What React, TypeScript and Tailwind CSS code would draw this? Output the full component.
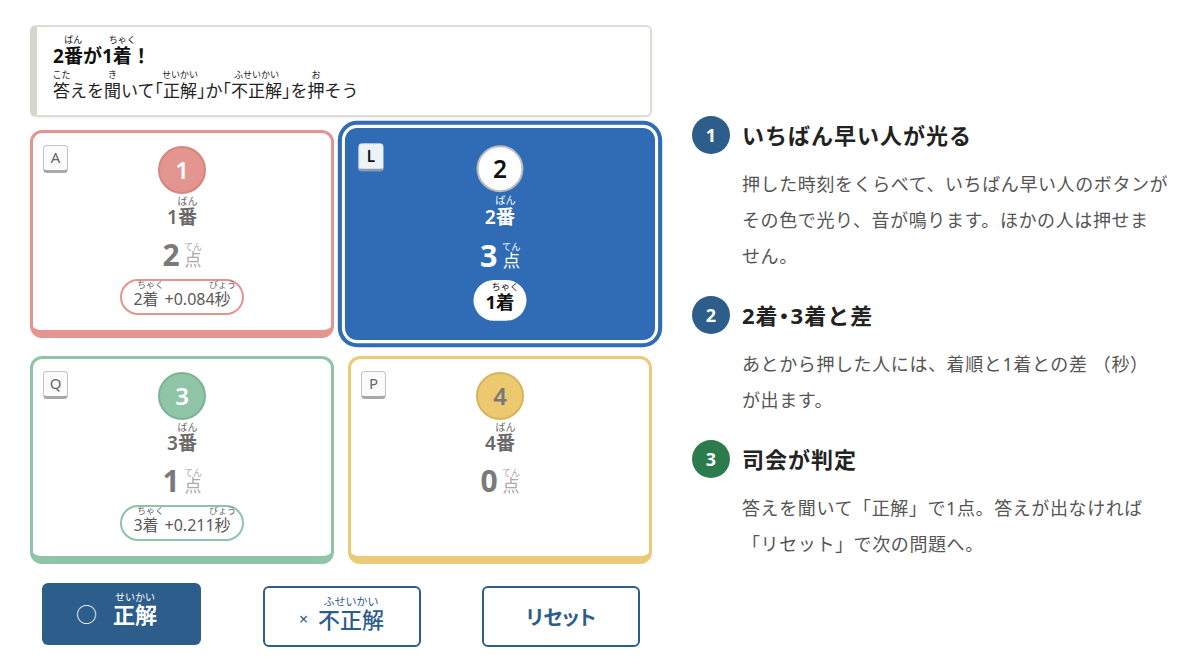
import React from "react";

// Furigana: the reading sits just above its base characters.
function Rb({ base, ruby, rc = "text-[9px]" }: { base: string; ruby: string; rc?: string }) {
  return (
    <span className="relative inline-block">
      {base}
      <span
        className={
          "absolute bottom-full left-1/2 -translate-x-1/2 whitespace-nowrap leading-none font-normal tracking-normal " +
          rc
        }
      >
        {ruby}
      </span>
    </span>
  );
}

// Half-width corner brackets
function Hb({ c }: { c: string }) {
  return <span className="[font-feature-settings:'halt']">{c}</span>;
}

function KeyCap({ label, active }: { label: string; active?: boolean }) {
  return (
    <div
      className={
        active
          ? "absolute left-[10px] top-[12px] flex h-[28px] w-[25px] items-center justify-center rounded-[4px] border border-[#dfe6ef] border-b-[3px] border-b-[#8d9aab] bg-[#eef3fa] pb-[1px] text-[15px] font-semibold text-[#111]"
          : "absolute left-[10px] top-[12px] flex h-[28px] w-[25px] items-center justify-center rounded-[4px] border border-[#c4c4c4] border-b-[3px] border-b-[#a8a8a8] bg-[#fbfbfb] pb-[1px] text-[15px] text-[#666]"
      }
    >
      {label}
    </div>
  );
}

type CardProps = {
  keyLabel: string;
  num: string;
  pts: string;
  frame: string;
  circle: string;
  pillBorder?: string;
  place?: string;
  diff?: string;
};

function PlayerCard({ keyLabel, num, pts, frame, circle, pillBorder, place, diff }: CardProps) {
  return (
    <div className={"relative h-[208px] rounded-[12px] border-[3px] border-b-[8px] bg-white " + frame}>
      <KeyCap label={keyLabel} />
      <div className="flex flex-col items-center pt-[13px]">
        <div
          className={
            "flex h-[48px] w-[48px] items-center justify-center rounded-full border-2 text-[24px] font-semibold leading-none " +
            circle
          }
        >
          {num}
        </div>
        <div className="mt-[13px] text-[19px] font-semibold leading-[20px] text-[#6a6a6a]">
          {num}
          <Rb base="番" ruby="ばん" rc="text-[10px] text-[#666] mb-[1px]" />
        </div>
        <div className="mt-[13px] flex items-baseline gap-[5px] leading-[30px]">
          <span className="text-[30px] font-bold text-[#7a7a7a]">{pts}</span>
          <span className="text-[17px] leading-[18px] text-[#aaa]">
            <Rb base="点" ruby="てん" rc="text-[9px] text-[#aaa]" />
          </span>
        </div>
        {place && (
          <div
            className={
              "mt-[9px] h-[36px] rounded-full border-2 bg-white px-[11px] pt-[9px] text-[16px] leading-[18px] text-[#5a5a5a] " +
              pillBorder
            }
          >
            {place}
            <Rb base="着" ruby="ちゃく" rc="text-[9px] text-[#666] mb-[1px]" />
            <span className="ml-[6px]">{diff}</span>
            <Rb base="秒" ruby="びょう" rc="text-[9px] text-[#666] mb-[1px]" />
          </div>
        )}
      </div>
    </div>
  );
}

function LeaderCard() {
  return (
    <div className="relative h-[208px] scale-[1.02] rounded-[12px] border-[3px] border-[#2f6cb5] bg-[#2f6cb5] shadow-[0_0_0_3px_#ffffff,0_0_0_7px_#2f6cb5]">
      <KeyCap label="L" active />
      <div className="flex flex-col items-center pt-[14px]">
        <div className="flex h-[46px] w-[46px] items-center justify-center rounded-full border-2 border-[#bdbdbd] bg-white text-[24px] font-semibold leading-none text-[#111]">
          2
        </div>
        <div className="mt-[14px] text-[19px] font-semibold leading-[20px] text-white">
          2
          <Rb base="番" ruby="ばん" rc="text-[10px] text-white mb-[1px]" />
        </div>
        <div className="mt-[13px] flex items-baseline gap-[5px] leading-[30px]">
          <span className="text-[30px] font-bold text-white">3</span>
          <span className="text-[17px] leading-[18px] text-white">
            <Rb base="点" ruby="てん" rc="text-[9px] text-white" />
          </span>
        </div>
        <div className="mt-[9px] h-[40px] rounded-full bg-white px-[12px] pt-[12px] text-[18px] font-bold leading-[20px] text-[#111]">
          1
          <Rb base="着" ruby="ちゃく" rc="text-[9px] text-[#111] mb-[1px]" />
        </div>
      </div>
    </div>
  );
}

type Step = { n: string; badge: string; title: React.ReactNode; lines: React.ReactNode[] };

const steps: Step[] = [
  {
    n: "1",
    badge: "bg-[#2d5d8b]",
    title: "いちばん早い人が光る",
    lines: ["押した時刻をくらべて、いちばん早い人のボタンが", "その色で光り、音が鳴ります。ほかの人は押せま", "せん。"],
  },
  {
    n: "2",
    badge: "bg-[#2d5d8b]",
    title: (
      <>
        2着<span className="[font-feature-settings:'halt']">・</span>3着と差
      </>
    ),
    lines: ["あとから押した人には、着順と1着との差 （秒）", "が出ます。"],
  },
  {
    n: "3",
    badge: "bg-[#2c7b4d]",
    title: "司会が判定",
    lines: ["答えを聞いて「正解」で1点。答えが出なければ", "「リセット」で次の問題へ。"],
  },
];

function StepBlock({ s, first }: { s: Step; first?: boolean }) {
  return (
    <div className={first ? "" : "mt-[22px]"}>
      <div className="flex h-[38px] items-center gap-[12px]">
        <div
          className={
            "flex h-[38px] w-[38px] items-center justify-center rounded-full text-[18px] font-bold text-white " + s.badge
          }
        >
          {s.n}
        </div>
        <div className="text-[22px] font-bold tracking-[1px] text-[#222]">{s.title}</div>
      </div>
      <div className="mt-[12px] pl-[50px] text-[18px] leading-[36px] tracking-[0.6px] text-[#555]">
        {s.lines.map((l, i) => (
          <div key={i} className="whitespace-nowrap">
            {l}
          </div>
        ))}
      </div>
    </div>
  );
}

export default function App() {
  return (
    <div className="flex h-[672px] w-[1200px] bg-white pl-[30px] font-['Noto_Sans','Noto_Sans_CJK_JP',sans-serif]">
      <div className="w-[622px] pt-[25px]">
        {/* announcement */}
        <div className="h-[92px] rounded-[6px] border-2 border-l-[7px] border-[#deddd5] border-l-[#d6d5cb] bg-white pl-[16px] pt-[18px] shadow-[0_1px_2px_rgba(0,0,0,0.06)]">
          <div className="text-[19px] font-bold leading-[22px] text-[#111]">
            2<Rb base="番" ruby="ばん" rc="text-[9px] mb-[1px]" />
            が1<Rb base="着" ruby="ちゃく" rc="text-[9px] mb-[1px]" />！
          </div>
          <div className="mt-[14px] text-[17px] leading-[20px] text-[#222]">
            <Rb base="答" ruby="こた" rc="text-[9px] mb-[2px]" />
            えを
            <Rb base="聞" ruby="き" rc="text-[9px] mb-[2px]" />
            いて<Hb c="「" />
            <Rb base="正解" ruby="せいかい" rc="text-[9px] mb-[2px]" />
            <Hb c="」" />か<Hb c="「" />
            <Rb base="不正解" ruby="ふせいかい" rc="text-[9px] mb-[2px]" />
            <Hb c="」" />を
            <Rb base="押" ruby="お" rc="text-[9px] mb-[2px]" />
            そう
          </div>
        </div>

        {/* buzzer cards */}
        <div className="mt-[13px] grid grid-cols-2 gap-x-[14px] gap-y-[18px]">
          <PlayerCard
            keyLabel="A"
            num="1"
            pts="2"
            frame="border-[#e3958f]"
            circle="bg-[#e3958f] border-[#d6857f] text-white"
            pillBorder="border-[#e3958f]"
            place="2"
            diff="+0.084"
          />
          <LeaderCard />
          <PlayerCard
            keyLabel="Q"
            num="3"
            pts="1"
            frame="border-[#8fc4a6]"
            circle="bg-[#8fc4a6] border-[#7db493] text-white"
            pillBorder="border-[#8fc4a6]"
            place="3"
            diff="+0.211"
          />
          <PlayerCard
            keyLabel="P"
            num="4"
            pts="0"
            frame="border-[#ebca78]"
            circle="bg-[#ecc96f] border-[#d8b45c] text-[#777]"
          />
        </div>

        {/* host controls */}
        <div className="mt-[19px] flex items-start justify-between px-[12px]">
          <button className="flex h-[62px] w-[159px] items-center justify-center gap-[16px] rounded-[6px] bg-[#2d5d8b] pr-[10px] text-white">
            <span className="text-[21px] leading-none">○</span>
            <span className="text-[22px] font-bold leading-[24px]">
              <Rb base="正解" ruby="せいかい" rc="text-[10px] text-white" />
            </span>
          </button>
          <button className="mt-[3px] flex h-[61px] w-[158px] items-center justify-center gap-[10px] rounded-[6px] border-2 border-[#2d5d8b] bg-white pt-[4px] text-[#2d5d8b]">
            <span className="text-[16px] leading-none">×</span>
            <span className="text-[22px] font-medium leading-[24px]">
              <Rb base="不正解" ruby="ふせいかい" rc="text-[11px] text-[#2d5d8b] tracking-[1px]" />
            </span>
          </button>
          <button className="mt-[3px] flex h-[61px] w-[158px] items-center justify-center rounded-[6px] border-2 border-[#2d5d8b] bg-white pt-[2px] text-[20px] font-bold text-[#2d5d8b] [font-feature-settings:'palt']">
            リセット
          </button>
        </div>
      </div>

      {/* how it works */}
      <div className="ml-[40px] pt-[116px]">
        {steps.map((s, i) => (
          <StepBlock key={s.n} s={s} first={i === 0} />
        ))}
      </div>
    </div>
  );
}
